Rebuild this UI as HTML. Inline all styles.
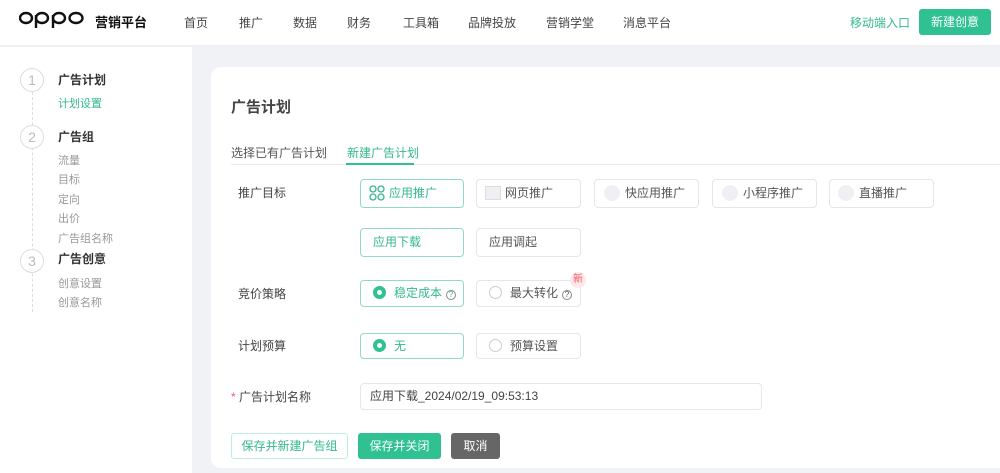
<!DOCTYPE html><html><head><meta charset="utf-8"><style>
*{margin:0;padding:0;box-sizing:border-box}
body{width:1000px;height:473px;overflow:hidden;background:#f0f2f5;font-family:"Liberation Sans","Noto Sans CJK SC",sans-serif;font-size:12px;color:#333;position:relative}
.a{position:absolute;white-space:nowrap}
.hdr{left:0;top:0;width:1000px;height:46px;background:#fff;border-bottom:1px solid #eef0f3}
.nav{top:14px;font-size:12px;color:#444}
.side{left:0;top:47px;width:192px;height:426px;background:#fff}
.circ{width:24px;height:24px;border:1px solid #ddd;border-radius:50%;color:#bbb;font-size:14px;text-align:center;line-height:22px;background:#fff}
.st{font-weight:bold;font-size:12px;color:#333}
.si{font-size:11px;color:#999}
.card{left:211px;top:67px;width:800px;height:401px;background:#fff;border-radius:10px}
.box{height:29px;border:1px solid #e6e6e6;border-radius:4px;background:#fff;color:#555;font-size:12px;line-height:27px;padding-left:12px}
.on{border-color:#8fdcc0;color:#35b98a}
.lbl{font-size:12px;color:#444}
.rad{display:inline-block;width:13px;height:13px;border-radius:50%;border:1px solid #ccc;vertical-align:-2px;margin-right:8px}
.rad.s{border:4px solid #2fc192}
.q{display:inline-block;width:10px;height:10px;border:1px solid #888;border-radius:50%;font-size:8px;line-height:8px;text-align:center;margin-left:4px;vertical-align:0}
.ic{display:inline-block;width:16px;height:16px;border-radius:50%;background:#eef0f3;vertical-align:-4px;margin-right:5px}
</style></head><body>
<div class="a hdr"></div>
<svg class="a" style="left:19px;top:10px" width="66" height="20" viewBox="0 0 66 20" fill="none" stroke="#111" stroke-width="2.4">
<ellipse cx="7" cy="8" rx="6" ry="5"/>
<ellipse cx="23" cy="8" rx="6" ry="5"/><line x1="17" y1="5" x2="17" y2="18"/>
<ellipse cx="40" cy="8" rx="6" ry="5"/><line x1="34" y1="5" x2="34" y2="18"/>
<ellipse cx="57" cy="8" rx="6.5" ry="5"/>
</svg>
<div class="a" style="left:95px;top:12px;font-size:13px;font-weight:bold;color:#111">营销平台</div>
<div class="a nav" style="left:184px">首页</div>
<div class="a nav" style="left:239px">推广</div>
<div class="a nav" style="left:293px">数据</div>
<div class="a nav" style="left:347px">财务</div>
<div class="a nav" style="left:403px">工具箱</div>
<div class="a nav" style="left:468px">品牌投放</div>
<div class="a nav" style="left:546px">营销学堂</div>
<div class="a nav" style="left:623px">消息平台</div>
<div class="a nav" style="left:850px;color:#35b98a">移动端入口</div>
<div class="a" style="left:919px;top:9px;width:72px;height:26px;background:#2fc192;border-radius:3px;color:#fff;font-size:12px;text-align:center;line-height:26px">新建创意</div>

<div class="a side"></div>
<div class="a" style="left:32px;top:92px;height:220px;border-left:1px dashed #ddd"></div>
<div class="a circ" style="left:20px;top:68px">1</div>
<div class="a circ" style="left:20px;top:125px">2</div>
<div class="a circ" style="left:20px;top:249px">3</div>
<div class="a st" style="left:58px;top:71px">广告计划</div>
<div class="a si" style="left:58px;top:95px;color:#35b98a">计划设置</div>
<div class="a st" style="left:58px;top:128px">广告组</div>
<div class="a si" style="left:58px;top:152px">流量</div>
<div class="a si" style="left:58px;top:171px">目标</div>
<div class="a si" style="left:58px;top:191px">定向</div>
<div class="a si" style="left:58px;top:210px">出价</div>
<div class="a si" style="left:58px;top:230px">广告组名称</div>
<div class="a st" style="left:58px;top:250px">广告创意</div>
<div class="a si" style="left:58px;top:275px">创意设置</div>
<div class="a si" style="left:58px;top:294px">创意名称</div>

<div class="a card"></div>
<div class="a" style="left:231px;top:96px;font-size:15px;font-weight:bold;color:#444">广告计划</div>
<div class="a" style="left:231px;top:144px;color:#555">选择已有广告计划</div>
<div class="a" style="left:347px;top:144px;color:#35b98a">新建广告计划</div>
<div class="a" style="left:231px;top:164px;width:769px;border-top:1px solid #e8e8e8"></div>
<div class="a" style="left:346px;top:163px;width:68px;border-top:2px solid #2fc192"></div>

<div class="a lbl" style="left:238px;top:184px">推广目标</div>
<div class="a box on" style="left:360px;top:179px;width:104px;padding-left:8px"><span style="display:inline-block;width:16px;height:16px;vertical-align:-4px;margin-right:4px"><svg width="16" height="16" viewBox="0 0 16 16" fill="none" stroke="#35b98a" stroke-width="1.3"><circle cx="4" cy="4" r="3"/><circle cx="12" cy="4" r="3"/><circle cx="4" cy="12" r="3"/><circle cx="12" cy="12" r="3"/></svg></span>应用推广</div>
<div class="a box" style="left:476px;top:179px;width:105px;padding-left:8px"><span style="display:inline-block;width:16px;height:14px;background:#eef0f3;border:1px solid #ddd;vertical-align:-3px;margin-right:4px"></span>网页推广</div>
<div class="a box" style="left:594px;top:179px;width:105px;padding-left:9px"><span class="ic"></span>快应用推广</div>
<div class="a box" style="left:712px;top:179px;width:105px;padding-left:9px"><span class="ic"></span>小程序推广</div>
<div class="a box" style="left:829px;top:179px;width:105px;padding-left:8px"><span class="ic"></span>直播推广</div>
<div class="a box on" style="left:360px;top:228px;width:104px">应用下载</div>
<div class="a box" style="left:476px;top:228px;width:105px">应用调起</div>

<div class="a lbl" style="left:238px;top:285px">竞价策略</div>
<div class="a box on" style="left:360px;top:280px;width:104px;height:27px;line-height:25px"><span class="rad s"></span>稳定成本<span class="q">?</span></div>
<div class="a box" style="left:476px;top:280px;width:105px;height:27px;line-height:25px"><span class="rad"></span>最大转化<span class="q">?</span></div>
<div class="a" style="left:570px;top:272px;width:16px;height:16px;border-radius:50%;background:#fde8ea;color:#f05a6a;font-size:10px;text-align:center;line-height:16px">新</div>

<div class="a lbl" style="left:238px;top:337px">计划预算</div>
<div class="a box on" style="left:360px;top:333px;width:104px;height:26px;line-height:24px"><span class="rad s"></span>无</div>
<div class="a box" style="left:476px;top:333px;width:105px;height:26px;line-height:24px"><span class="rad"></span>预算设置</div>

<div class="a lbl" style="left:231px;top:388px"><span style="color:#f05a6a">*</span> 广告计划名称</div>
<div class="a box" style="left:360px;top:383px;width:402px;height:27px;line-height:25px;padding-left:9px;color:#444">应用下载_2024/02/19_09:53:13</div>

<div class="a" style="left:231px;top:433px;width:117px;height:26px;border:1px solid #bfeedd;border-radius:3px;color:#35b98a;text-align:center;line-height:24px">保存并新建广告组</div>
<div class="a" style="left:358px;top:433px;width:83px;height:26px;background:#2fc192;border-radius:3px;color:#fff;text-align:center;line-height:26px">保存并关闭</div>
<div class="a" style="left:451px;top:433px;width:49px;height:26px;background:#666;border-radius:3px;color:#fff;text-align:center;line-height:26px">取消</div>
</body></html>
